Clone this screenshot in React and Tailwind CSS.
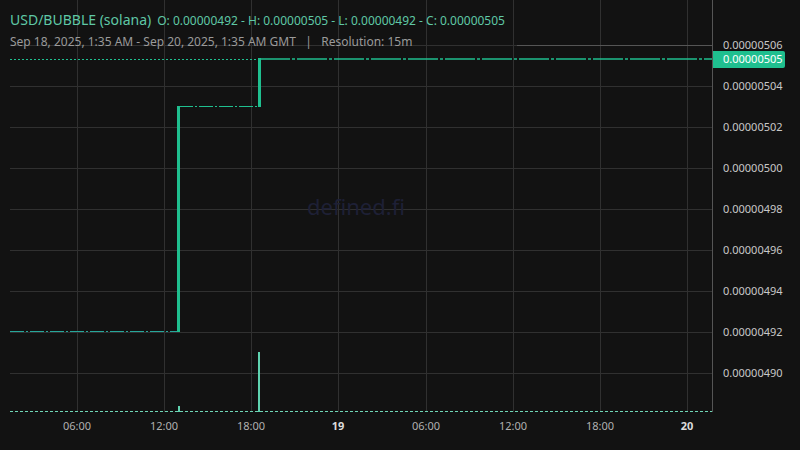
export default function App() {
  const hs = [45, 86, 127, 168, 209, 250, 291, 332, 373];
  const vs = [77, 164, 251, 338, 426, 513, 600, 687];
  const prices = [["0.00000506",45],["0.00000504",86],["0.00000502",127],["0.00000500",168],["0.00000498",209],["0.00000496",250],["0.00000494",291],["0.00000492",332],["0.00000490",373]];
  const times = [["06:00",77,false],["12:00",164,false],["18:00",251,false],["19",338,true],["06:00",426,false],["12:00",513,false],["18:00",600,false],["20",687,true]];
  const teal = "#1fbf8f";
  return (
    <div className="w-[800px] h-[450px] bg-[#121212] flex flex-col overflow-hidden" style={{fontFamily:'"Noto Sans", "Open Sans", sans-serif'}}>
      <div className="flex h-[412px]">
        <div className="relative w-[712px] h-full">
          <svg width="712" height="412" className="absolute inset-0">
            {hs.map(y => <line key={y} x1="10" x2="712" y1={y+0.5} y2={y+0.5} stroke="#303030" />)}
            {vs.map(x => <line key={x} x1={x+0.5} x2={x+0.5} y1="0" y2="412" stroke="#303030" />)}
            <line x1="517" x2="712" y1="45.5" y2="45.5" stroke="#555" />
            <line x1="10" x2="259" y1="59.5" y2="59.5" stroke={teal} strokeDasharray="2 2" />
            <line x1="260" x2="712" y1="59" y2="59" stroke={teal} strokeWidth="1.5" strokeDasharray="30 2 3 2" />
            <line x1="10" x2="178" y1="331.5" y2="331.5" stroke="#26a69a" strokeDasharray="14 2 2 2" />
            <rect x="177" y="106" width="3" height="226" fill={teal} />
            <line x1="179" x2="259" y1="106.5" y2="106.5" stroke={teal} strokeDasharray="14 2 2 2" />
            <rect x="258" y="58" width="3" height="49" fill={teal} />
            <line x1="10" x2="712" y1="411.5" y2="411.5" stroke="#6fd6b6" strokeDasharray="3 2" />
            <rect x="178" y="406" width="2" height="6" fill="#5fd3b0" />
            <rect x="258" y="352" width="2" height="60" fill="#5fd3b0" />
          </svg>
          <div className="absolute inset-0 flex items-center justify-center text-[22px] text-[#1e2036] pointer-events-none">defined.fi</div>
          <div className="absolute left-[10px] top-[10px] flex flex-col gap-[3px]">
            <div className="flex items-baseline gap-[6px] text-[#5fc8a6] leading-[20px]">
              <span className="text-[14px]">USD/BUBBLE (solana)</span>
              <span className="text-[12px]">O: 0.00000492 - H: 0.00000505 - L: 0.00000492 - C: 0.00000505</span>
            </div>
            <div className="text-[12px] text-[#9a9a9a] leading-[16px]">Sep 18, 2025, 1:35 AM - Sep 20, 2025, 1:35 AM GMT &nbsp;&nbsp;|&nbsp;&nbsp; Resolution: 15m</div>
          </div>
        </div>
        <div className="relative flex-1 border-l border-[#555] h-full text-[11px] text-[#c8c8c8]">
          {prices.map(([p,y]) => <div key={p} className="absolute left-[10px]" style={{top:y-8}}>{p}</div>)}
          <div className="absolute left-0 top-[51px] w-[72px] h-[17px] bg-[#1fbf8f] text-white rounded-r-[2px] flex items-center pl-[10px]">0.00000505</div>
        </div>
      </div>
      <div className="relative h-[38px] w-[712px] text-[11px] text-[#b0b0b0]">
        {times.map(([t,x,b],i) => <div key={i} className={"absolute top-[6px] -translate-x-1/2 " + (b ? "font-bold text-[#dcdcdc]" : "")} style={{left:x}}>{t}</div>)}
      </div>
    </div>
  );
}
